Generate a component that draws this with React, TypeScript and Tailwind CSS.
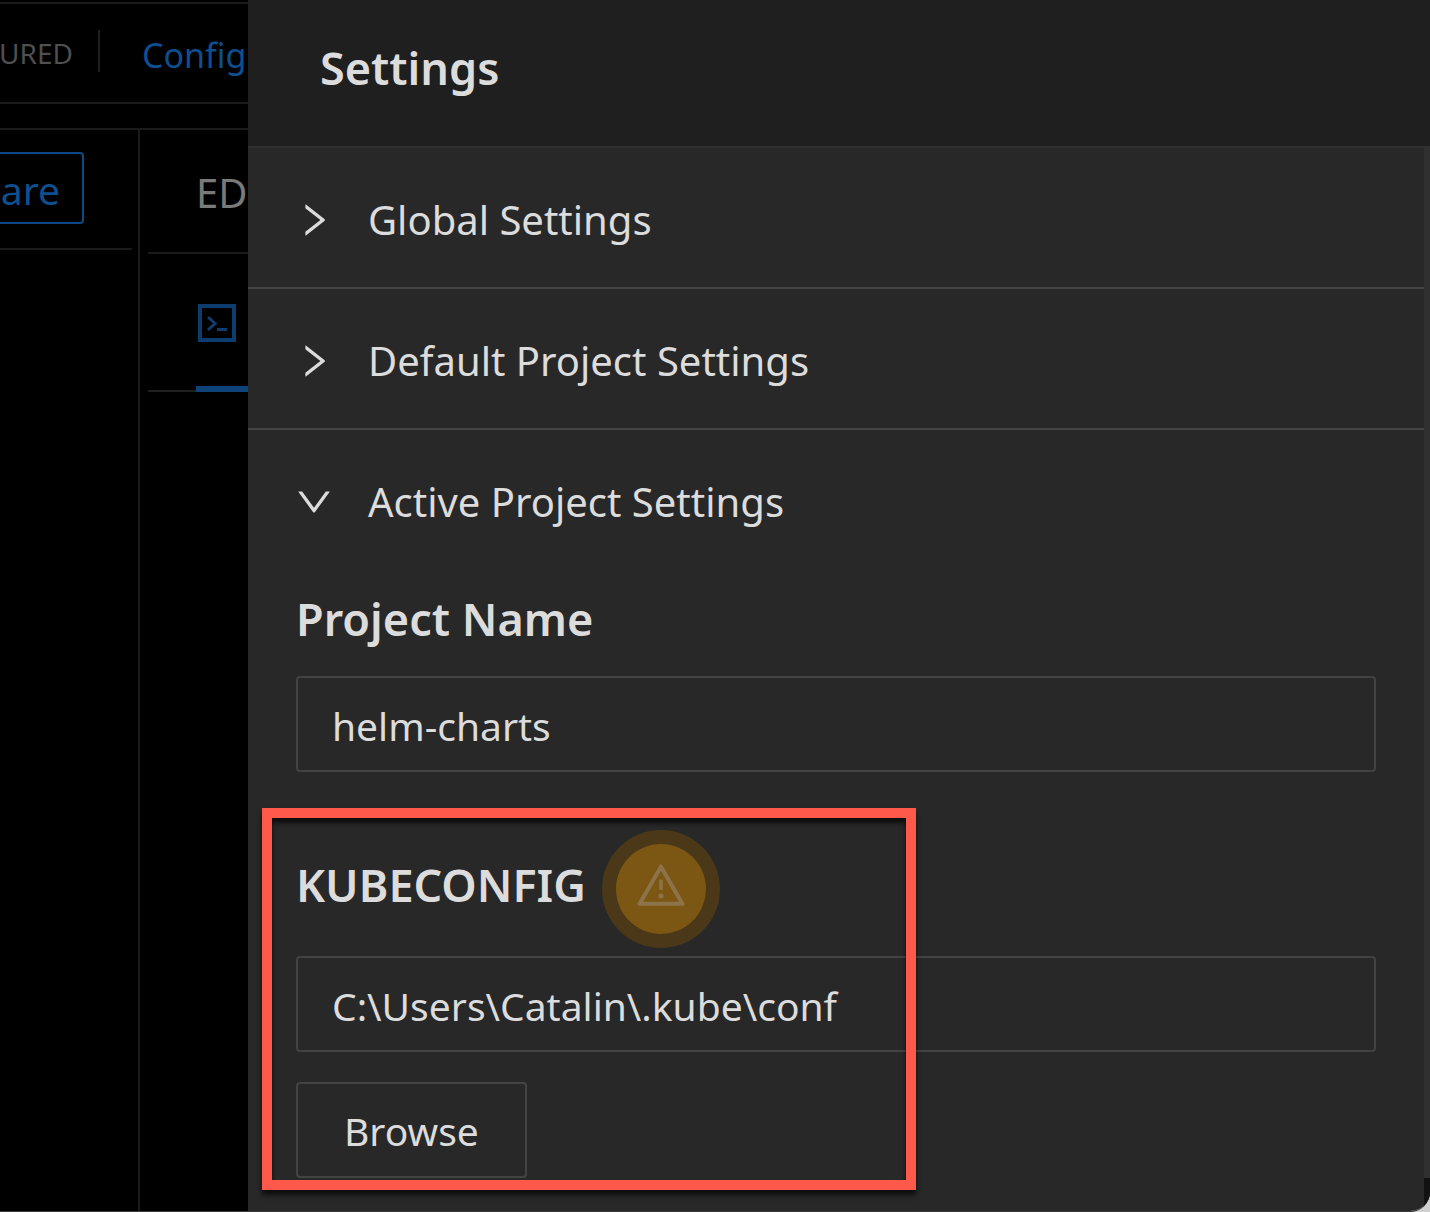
import { useState } from "react";
import type { ReactNode } from "react";
import { AiOutlineDown, AiOutlineRight, AiOutlineWarning } from "react-icons/ai";

function Workspace() {
  return (
    <div className="flex w-[248px] shrink-0 flex-col overflow-hidden bg-black pt-[2px]">
      <header className="flex h-[102px] items-center border-y-2 border-[#1a1a1a]">
        <div className="-mt-1 flex h-[42px] w-[100px] shrink-0 items-center justify-end border-r-2 border-[#1f1f1f] pt-1 pr-[25px] text-[28px] whitespace-nowrap text-[#4f4f4f]">
          URED
        </div>
        <a href="#configure" className="ml-[42px] pt-1 text-[34px] leading-[48px] whitespace-nowrap text-[#0d4f8f]">
          Config
        </a>
      </header>
      <div className="mt-6 flex grow border-t-2 border-[#1a1a1a]">
        <div className="w-[140px] shrink-0 border-r-2 border-[#1a1a1a] pr-[6px]">
          <div className="flex h-[120px] border-b-2 border-[#1a1a1a] pt-[22px]">
            <button
              type="button"
              className="flex h-[72px] w-[84px] items-center justify-end rounded-r-[4px] border-2 border-l-0 border-[#0d4a85] pt-1 pr-[22px] text-[39px] text-[#0d4f8f]"
            >
              are
            </button>
          </div>
        </div>
        <div className="ml-2 grow">
          <h2 className="flex h-[124px] items-center border-b-2 border-[#1a1a1a] pt-1 pl-12 text-[40px] whitespace-nowrap text-[#7a7a7a]">
            ED
          </h2>
          <div className="flex h-[138px] items-end border-b-2 border-[#1f1f1f]">
            <button
              type="button"
              aria-label="Source"
              className="-mb-[2px] ml-12 flex h-[88px] w-[52px] items-start border-b-6 border-[#0d4379] text-[#0d3d6e]"
            >
              <svg viewBox="0 0 38 38" className="ml-[2px] h-[38px] w-[38px] shrink-0" fill="none" stroke="currentColor">
                <rect x="2" y="2" width="34" height="34" strokeWidth="4" />
                <path d="M10 13l7 6.500-7 6.500" strokeWidth="3" />
                <path d="M19 25.500h10" strokeWidth="3" />
              </svg>
            </button>
          </div>
        </div>
      </div>
    </div>
  );
}

function SectionHeader({ title, open, onToggle }: { title: string; open: boolean; onToggle: () => void }) {
  return (
    <button
      type="button"
      aria-expanded={open}
      onClick={onToggle}
      className="flex h-[139px] w-full items-center gap-[33px] pt-1 pl-[45px] text-left text-[40px]"
    >
      <span className="flex w-[42px] justify-center text-[42px]">
        {open ? <AiOutlineDown /> : <AiOutlineRight />}
      </span>
      {title}
    </button>
  );
}

function Section({ title, initiallyOpen = false, children }: { title: string; initiallyOpen?: boolean; children?: ReactNode }) {
  const [open, setOpen] = useState(initiallyOpen);
  return (
    <section className="border-b-2 border-[#434343] last:border-b-0">
      <SectionHeader title={title} open={open} onToggle={() => setOpen(!open)} />
      {open && children}
    </section>
  );
}

const inputClass =
  "h-24 w-full rounded-[4px] border-2 border-[#434343] bg-transparent px-[34px] pt-[2px] text-[39px] outline-none";

function ActiveProjectForm() {
  return (
    <div className="px-12 pt-[20px] pb-8">
      <label htmlFor="project-name" className="flex h-[60px] items-center text-[45px] font-semibold">
        Project Name
      </label>
      <input id="project-name" defaultValue="helm-charts" className={`${inputClass} mt-[27px]`} />
      <div className="relative mt-[58px]">
        <div className="flex h-[118px] items-center gap-4">
          <label htmlFor="kubeconfig" className="pb-2 text-[45px] font-semibold">
            KUBECONFIG
          </label>
          <span className="flex size-[118px] items-center justify-center rounded-full bg-[#4a3818]">
            <span className="flex size-[90px] items-center justify-center rounded-full bg-[#7c5713] pb-2 text-[54px] text-[#8c7349]">
              <AiOutlineWarning />
            </span>
          </span>
        </div>
        <input id="kubeconfig" defaultValue="C:\Users\Catalin\.kube\conf" className={`${inputClass} mt-2`} />
        <button type="button" className="mt-[30px] flex h-24 items-center rounded-[4px] border-2 border-[#434343] px-[46px] pt-[2px] text-[39px]">
          Browse
        </button>
        <div className="pointer-events-none absolute -top-[22px] -bottom-3 -left-[34px] w-[654px] border-10 border-[#ff594c] shadow-[0_5px_5px_rgba(0,0,0,0.7),inset_0_5px_5px_rgba(0,0,0,0.7)]" />
      </div>
    </div>
  );
}

export default function App() {
  return (
    <div className="bg-[#d0d0d0] font-['Noto_Sans','Segoe_UI',sans-serif]">
      <div className="flex min-h-screen overflow-hidden rounded-br-[20px] border-b border-[#3a3a3a]">
        <Workspace />
        <aside className="flex min-w-0 grow flex-col bg-[#282828] text-[#dcdcdc]">
          <header className="flex h-[148px] items-center border-b-2 border-[#303030] bg-[#1f1f1f] pb-[10px] pl-[72px]">
            <h1 className="text-[45px] font-semibold">Settings</h1>
          </header>
          <div className="flex grow">
            <div className="min-w-0 grow">
              <Section title="Global Settings" />
              <Section title="Default Project Settings" />
              <Section title="Active Project Settings" initiallyOpen>
                <ActiveProjectForm />
              </Section>
            </div>
            <div className="flex w-[6px] flex-col bg-[#303030]">
              <div className="mt-auto h-[33px] bg-[#121212]" />
            </div>
          </div>
        </aside>
      </div>
    </div>
  );
}
